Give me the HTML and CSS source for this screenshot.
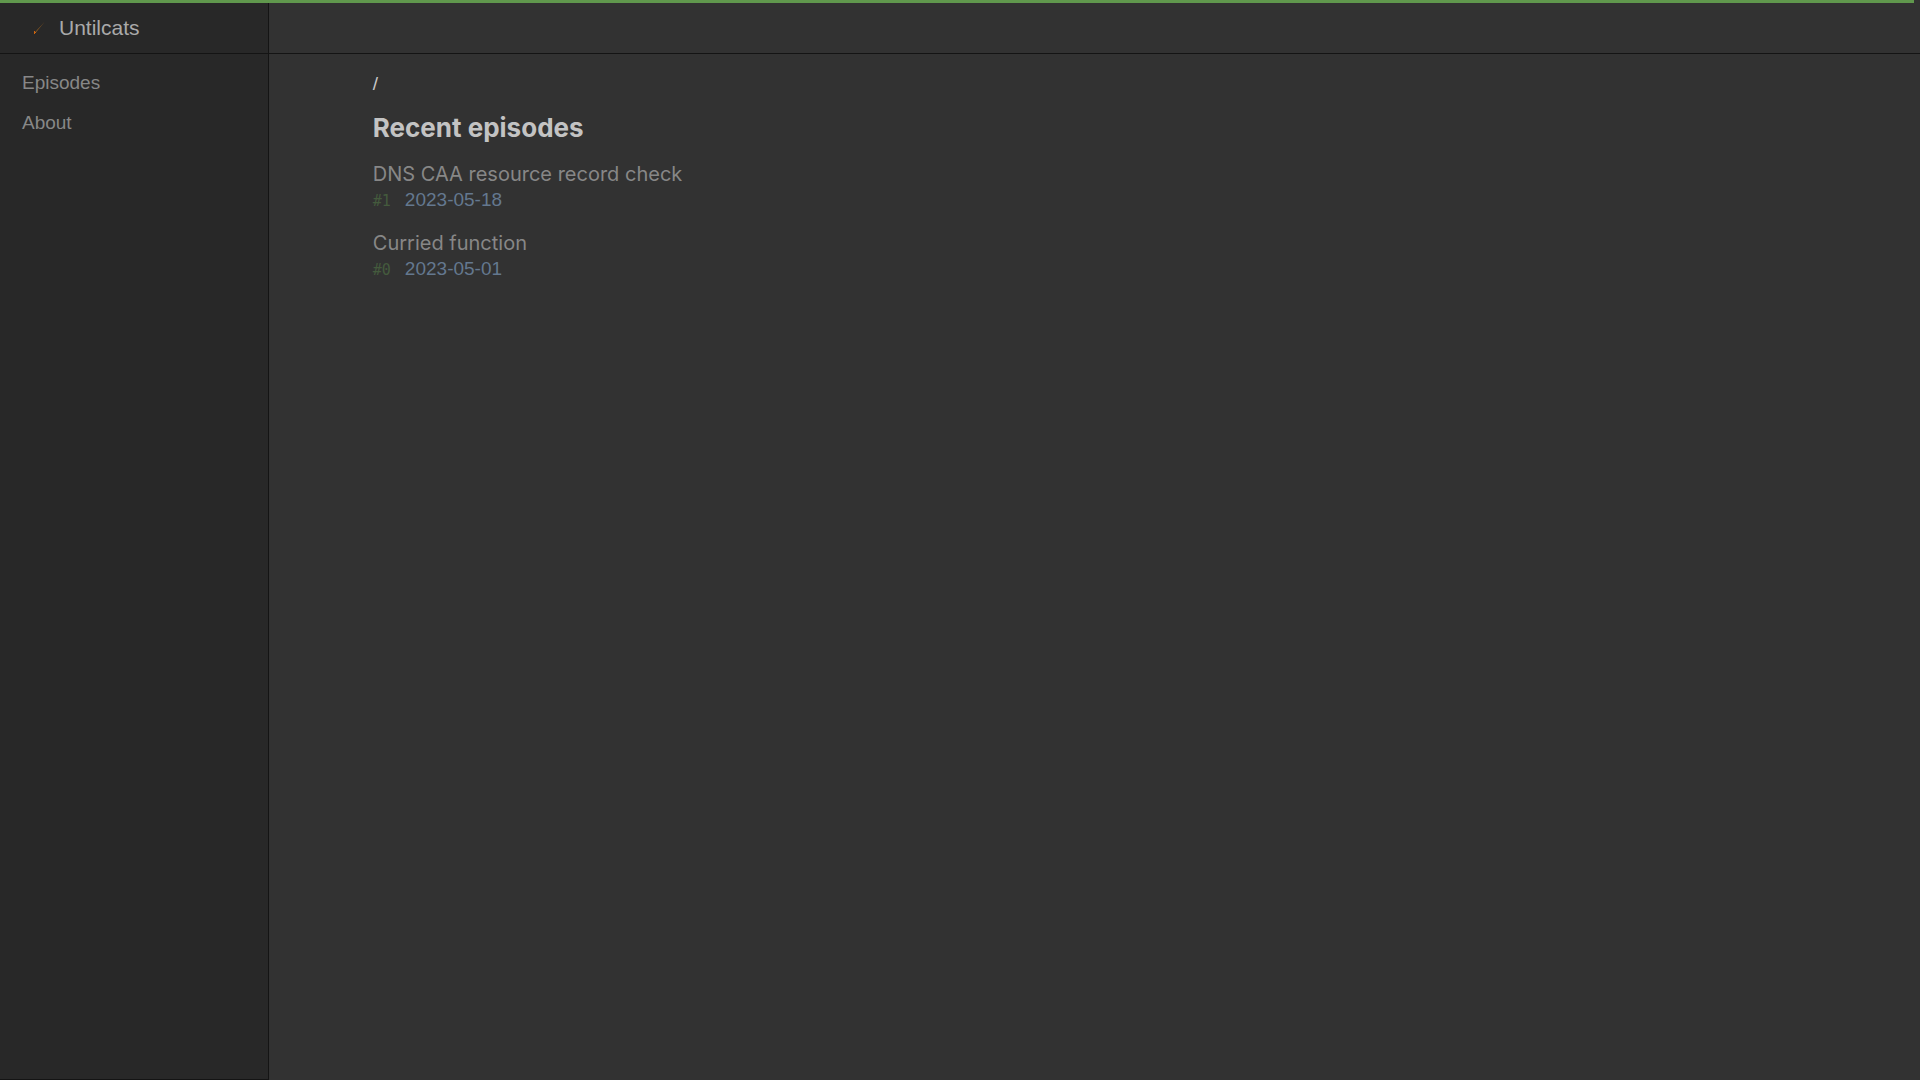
FILE: index.html
```html
<!DOCTYPE html>
<html lang="en">
<head>
    <meta charset="UTF-8">
    <meta name="viewport" content="width=device-width, initial-scale=1.0">
    <title>Untilcats</title>
    <link rel="stylesheet" href="styles.css">
</head>
<body>
    <div class="progress"><div class="progress-bar"></div></div>
    <div class="layout">
        <aside class="sidebar">
            <a class="brand" href="/">
                <svg class="logo" viewBox="0 0 24 24" aria-hidden="true">
                    <path d="M7 16.200L16.500 6 8 16.200z" fill="#a06420"/>
                    <path d="M6 15h1v1h1v1H7v1H6z" fill="#cc6410"/>
                </svg>
                <span>Untilcats</span>
            </a>
            <nav class="menu">
                <a href="/episodes">Episodes</a>
                <a href="/about">About</a>
            </nav>
        </aside>
        <div class="page">
            <header class="topbar"></header>
            <main class="content">
                <div class="path">/</div>
                <h1>Recent episodes</h1>
                <ul class="episodes">
                    <li>
                        <a href="/episodes/1">DNS CAA resource record check</a>
                        <div class="meta"><span class="number">#1</span><time datetime="2023-05-18">2023-05-18</time></div>
                    </li>
                    <li>
                        <a href="/episodes/0">Curried function</a>
                        <div class="meta"><span class="number">#0</span><time datetime="2023-05-01">2023-05-01</time></div>
                    </li>
                </ul>
            </main>
        </div>
    </div>
</body>
</html>
```

FILE: styles.css
```css
* {
    box-sizing: border-box;
}

body {
    display: flex;
    flex-direction: column;
    min-height: 100vh;
    margin: 0;
    background-color: #323232;
    color: #c8c8c8;
    font-family: "Liberation Sans", Arial, sans-serif;
    font-size: 19px;
}

a {
    color: #878787;
    text-decoration: none;
}

.progress {
    height: 3px;
}

.progress-bar {
    width: 99.7%;
    height: 100%;
    background-color: #60984d;
}

.layout {
    display: flex;
    flex: 1;
}

.sidebar {
    width: 14%;
    background-color: #282828;
    border-right: 1px solid #141414;
    border-bottom: 1px solid #141414;
}

.brand,
.topbar {
    height: 51px;
    border-bottom: 1px solid #141414;
}

.brand {
    display: flex;
    align-items: center;
    gap: 7px;
    padding-left: 28px;
    color: #aaaaaa;
    font-size: 21px;
}

.logo {
    width: 24px;
    height: 24px;
}

.menu {
    display: flex;
    flex-direction: column;
    gap: 16px;
    padding: 17px 22px;
    line-height: 24px;
}

.page {
    flex: 1;
}

.content {
    padding: 18px 104px;
}

.path {
    line-height: 24px;
}

h1 {
    margin: 16px 0;
    color: #c3c3c3;
    font-family: Inter, sans-serif;
    font-size: 26px;
    line-height: 32px;
}

.episodes {
    display: flex;
    flex-direction: column;
    gap: 17px;
    margin: 0;
    padding: 0;
    list-style: none;
}

.episodes a {
    display: block;
    font-family: Inter, sans-serif;
    font-size: 20px;
    line-height: 28px;
}

.meta {
    display: flex;
    align-items: baseline;
    gap: 14px;
    line-height: 24px;
}

.number {
    color: #445a3d;
    font-family: "DejaVu Sans Mono", monospace;
    font-size: 15px;
    line-height: 20px;
}

time {
    color: #64788f;
}
```
